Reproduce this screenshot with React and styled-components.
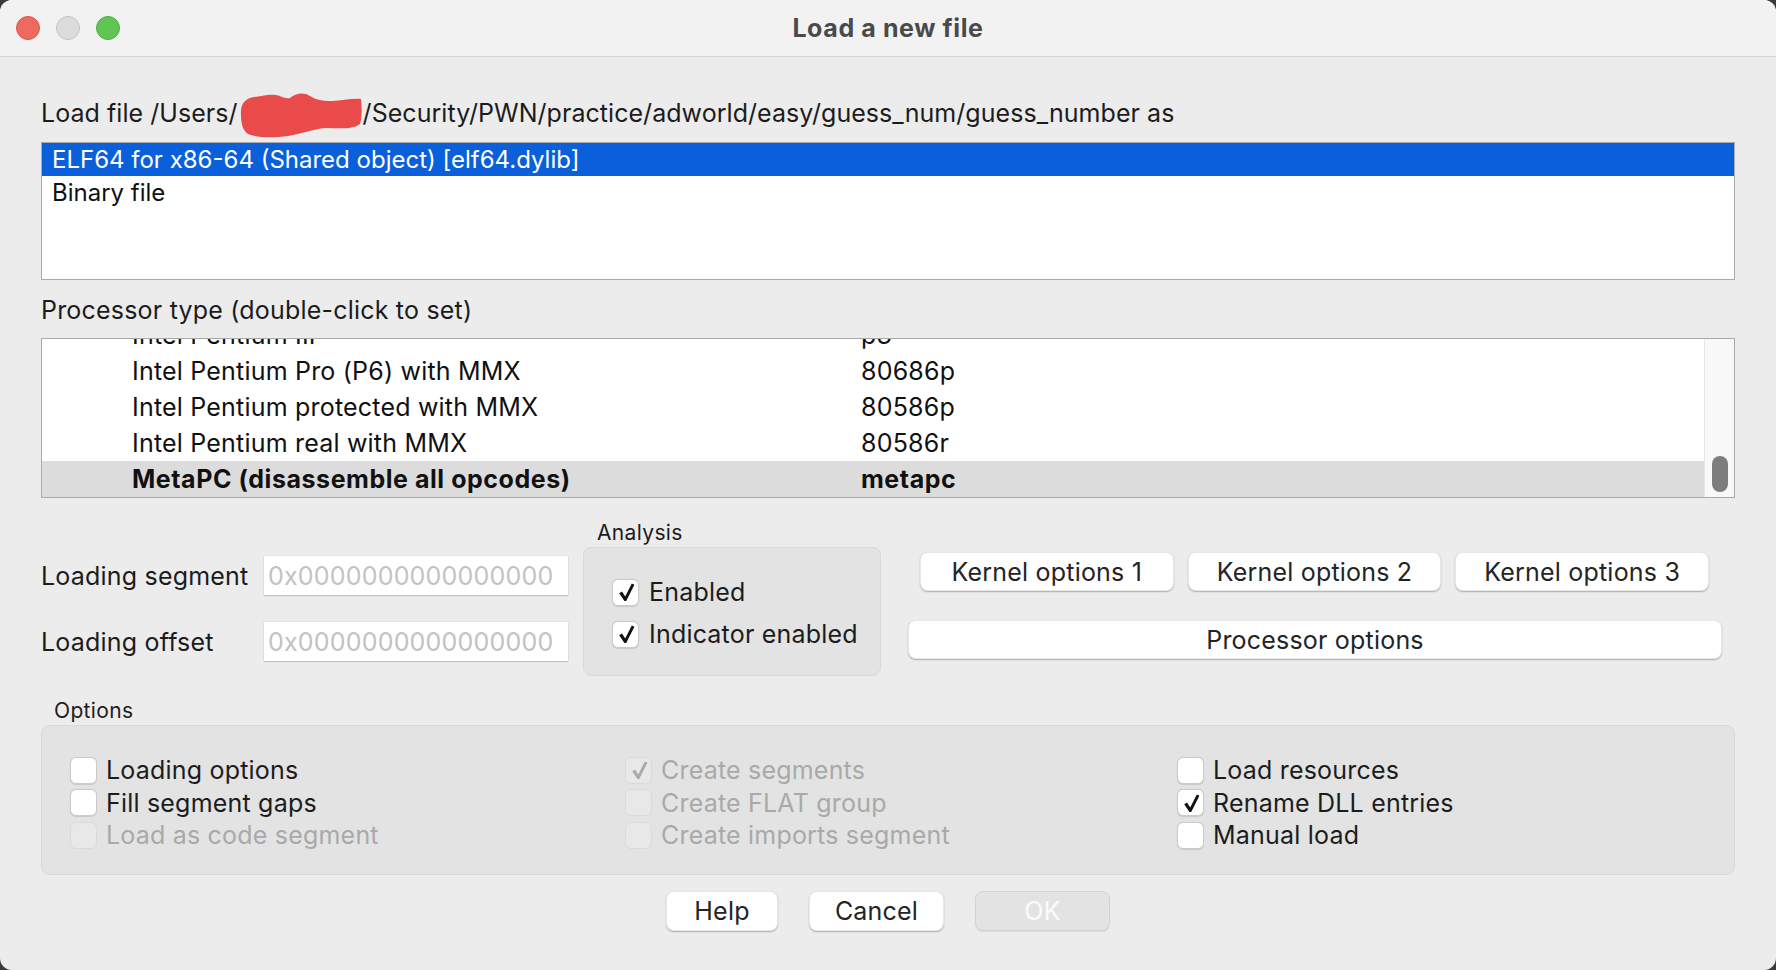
import React from 'react';
import styled, { createGlobalStyle } from 'styled-components';

const FONT = 'Inter, "Noto Sans", "Liberation Sans", sans-serif';

const GlobalStyle = createGlobalStyle`
  html, body { margin: 0; padding: 0; background: #3a3a3a; }
  body { font-family: ${FONT}; }
  #root { width: 1776px; height: 970px; }
  * { box-sizing: border-box; }
`;

const Window = styled.div`
  width: 1776px;
  height: 970px;
  background: #ececec;
  border-radius: 12px;
  overflow: hidden;
  display: flex;
  flex-direction: column;
  color: #1c1c1c;
  font-size: 25px;
  letter-spacing: 0.2px;
`;

const TitleBar = styled.div`
  height: 57px;
  flex: none;
  background: #f2f2f2;
  border-bottom: 1px solid #d3d3d3;
  display: grid;
  grid-template-columns: 1fr auto 1fr;
  align-items: center;
  padding: 0 16px;
`;

const Lights = styled.div`
  display: flex;
  gap: 16px;
`;

const Light = styled.span`
  width: 24px;
  height: 24px;
  border-radius: 50%;
  background: ${(p) => p.$fill};
  border: 1px solid ${(p) => p.$edge};
`;

const Title = styled.div`
  font-weight: 700;
  font-size: 25px;
  letter-spacing: 0.6px;
  color: #4a4a4a;
`;

const Body = styled.div`
  padding: 42px 41px 0;
  display: flex;
  flex-direction: column;
`;

const FieldLabel = styled.div`
  height: 28px;
  line-height: 28px;
  display: flex;
  align-items: center;
  white-space: pre;
  letter-spacing: ${(p) => p.$spacing ?? 0.2}px;
  margin-top: ${(p) => p.$top || 0}px;
  margin-bottom: ${(p) => p.$bottom || 0}px;
`;

const Redaction = styled.svg`
  flex: none;
  margin-top: 4px;
`;

const ListBox = styled.div`
  height: 138px;
  background: #fff;
  border: 1px solid #a9a9a9;
`;

const FormatRow = styled.div`
  height: 33px;
  line-height: 33px;
  padding-left: 10px;
  font-size: 24px;
  letter-spacing: 0;
  background: ${(p) => (p.$selected ? '#0a5fdb' : 'transparent')};
  color: ${(p) => (p.$selected ? '#fff' : '#111')};
`;

const ProcList = styled.div`
  height: 160px;
  background: #fff;
  border: 1px solid #a9a9a9;
  display: flex;
`;

const ProcRows = styled.div`
  flex: 1;
  overflow: hidden;
  display: flex;
  flex-direction: column;
  justify-content: flex-end;
`;

const ProcRow = styled.div`
  flex: none;
  height: 36px;
  line-height: 36px;
  display: grid;
  grid-template-columns: 729px 1fr;
  padding-left: 90px;
  background: ${(p) => (p.$selected ? '#dcdcdc' : 'transparent')};
  font-weight: ${(p) => (p.$selected ? 700 : 400)};
  letter-spacing: ${(p) => (p.$selected ? '0.55px' : '0.2px')};
  color: #111;
`;

const ScrollTrack = styled.div`
  width: 30px;
  flex: none;
  background: #f8f8f8;
  border-left: 1px solid #e6e6e6;
  display: flex;
  flex-direction: column;
  justify-content: flex-end;
  align-items: center;
  padding-bottom: 5px;
`;

const Thumb = styled.div`
  width: 16px;
  height: 36px;
  border-radius: 8px;
  background: #7d7d7d;
`;

const Middle = styled.div`
  margin-top: 21px;
  display: flex;
  align-items: flex-start;
`;

const AddressGrid = styled.div`
  padding-top: 37px;
  display: grid;
  grid-template-columns: 223px 304px;
  grid-template-rows: 39px 39px;
  row-gap: 27px;
  align-items: center;
`;

const AddressInput = styled.input`
  width: 304px;
  height: 39px;
  border: none;
  outline: none;
  background: #fff;
  box-shadow: 0 1px 1px rgba(0, 0, 0, 0.16), 0 0 0 0.5px rgba(0, 0, 0, 0.05);
  font-family: ${FONT};
  font-size: 25px;
  letter-spacing: 0.2px;
  padding: 0 4px;
  color: #222;
  &::placeholder { color: #c2c2c2; }
`;

const GroupColumn = styled.div`
  margin-left: ${(p) => p.$left || 0}px;
  width: ${(p) => p.$width}px;
  flex: none;
  display: flex;
  flex-direction: column;
`;

const GroupTitle = styled.div`
  height: 28px;
  line-height: 28px;
  font-size: 21px;
  letter-spacing: 0.35px;
  padding-left: ${(p) => p.$indent}px;
  margin-top: ${(p) => p.$top || 0}px;
  color: #1c1c1c;
`;

const GroupBox = styled.div`
  background: #e3e3e3;
  border: 1px solid #d9d9d9;
  border-radius: 8px;
  height: ${(p) => p.$height}px;
`;

const AnalysisList = styled.div`
  padding: 26px 0 0 28px;
  display: flex;
  flex-direction: column;
  gap: 6px;
`;

const CheckRow = styled.div`
  height: ${(p) => p.$h || 36}px;
  display: flex;
  align-items: center;
  gap: ${(p) => p.$gap || 9}px;
  color: ${(p) => (p.$disabled ? '#a9a9a9' : '#1c1c1c')};
  white-space: nowrap;
`;

const Box = styled.span`
  flex: none;
  width: 27px;
  height: 27px;
  border-radius: 6px;
  display: flex;
  align-items: center;
  justify-content: center;
  background: ${(p) => (p.$disabled ? '#e8e8e8' : '#fff')};
  border: 1px solid ${(p) => (p.$disabled ? '#dadada' : '#cbcbcb')};
  box-shadow: ${(p) => (p.$disabled ? 'none' : '0 0.5px 1px rgba(0,0,0,0.12)')};
`;

const ButtonColumn = styled.div`
  margin-left: 27px;
  width: 814px;
  padding-top: 33px;
  display: flex;
  flex-direction: column;
  gap: 29px;
`;

const KernelRow = styled.div`
  display: flex;
  gap: 14px;
  padding: 0 13px 0 12px;
`;

const PushButton = styled.button`
  height: ${(p) => p.$h || 39}px;
  flex: ${(p) => (p.$grow ? '1 1 0' : 'none')};
  width: ${(p) => (p.$w ? `${p.$w}px` : 'auto')};
  border-radius: 8px;
  font-family: ${FONT};
  font-size: 25px;
  letter-spacing: 0.2px;
  padding: 0;
  background: ${(p) => (p.disabled ? '#e3e3e3' : '#fff')};
  color: ${(p) => (p.disabled ? '#fbfbfb' : '#242424')};
  border: 1px solid ${(p) => (p.disabled ? '#d3d3d3' : 'rgba(0,0,0,0.09)')};
  box-shadow: ${(p) => (p.disabled ? '0 1px 1px rgba(0,0,0,0.08)' : '0 1px 1.5px rgba(0,0,0,0.28)')};
`;

const OptionsGrid = styled.div`
  padding: 28px 0 0 28px;
  display: grid;
  grid-auto-flow: column;
  grid-template-rows: repeat(3, 32.5px);
  grid-template-columns: 555px 552px 1fr;
`;

const Footer = styled.div`
  margin-top: 16px;
  display: flex;
  justify-content: center;
  gap: 31px;
`;

const Check = ({ disabled }) => (
  <svg width="20" height="22" viewBox="0 0 20 22">
    <path
      d="M3.2 12.2 L6 10.6 L9.2 15.6 L15.8 2.6 L18.4 3.8 L10.2 20 L8.4 20 Z"
      fill={disabled ? '#aaaaaa' : '#111111'}
    />
  </svg>
);

const CheckBox = ({ label, checked, disabled, gap, h }) => (
  <CheckRow $disabled={disabled} $gap={gap} $h={h}>
    <Box $disabled={disabled}>{checked && <Check disabled={disabled} />}</Box>
    <span>{label}</span>
  </CheckRow>
);

const procRows = [
  ['Intel Pentium III', 'p3'],
  ['Intel Pentium Pro (P6) with MMX', '80686p'],
  ['Intel Pentium protected with MMX', '80586p'],
  ['Intel Pentium real with MMX', '80586r'],
  ['MetaPC (disassemble all opcodes)', 'metapc', true],
];

const options = [
  ['Loading options', false, false],
  ['Fill segment gaps', false, false],
  ['Load as code segment', false, true],
  ['Create segments', true, true],
  ['Create FLAT group', false, true],
  ['Create imports segment', false, true],
  ['Load resources', false, false],
  ['Rename DLL entries', true, false],
  ['Manual load', false, false],
];

export default function App() {
  return (
    <>
      <GlobalStyle />
      <Window>
        <TitleBar>
          <Lights>
            <Light $fill="#ee6a5f" $edge="#d65a50" />
            <Light $fill="#dcdcdc" $edge="#c5c5c5" />
            <Light $fill="#61c554" $edge="#50ad44" />
          </Lights>
          <Title>Load a new file</Title>
          <span />
        </TitleBar>
        <Body>
          <FieldLabel $bottom={15} $spacing={0.05}>
            <span>Load file /Users/</span>
            <Redaction width="125" height="46" viewBox="0 0 125 46">
              <path
                d="M3 22 C2 12 8 6 16 5 C26 4 30 2 38 3 C44 4 46 7 52 6 C58 1 66 0 72 4 C78 8 84 9 94 9 C104 9 114 6 123 7 C124 16 124 26 122 32 C114 38 100 36 88 36 C74 37 64 42 50 44 C36 46 20 46 10 42 C4 38 3 30 3 22 Z"
                fill="#e94a4a"
              />
            </Redaction>
            <span>/Security/PWN/practice/adworld/easy/guess_num/guess_number as</span>
          </FieldLabel>
          <ListBox>
            <FormatRow $selected>ELF64 for x86-64 (Shared object) [elf64.dylib]</FormatRow>
            <FormatRow>Binary file</FormatRow>
          </ListBox>
          <FieldLabel $top={16} $bottom={14}>Processor type (double-click to set)</FieldLabel>
          <ProcList>
            <ProcRows>
              {procRows.map(([name, code, sel]) => (
                <ProcRow key={code} $selected={sel}>
                  <span>{name}</span>
                  <span>{code}</span>
                </ProcRow>
              ))}
            </ProcRows>
            <ScrollTrack>
              <Thumb />
            </ScrollTrack>
          </ProcList>
          <Middle>
            <AddressGrid>
              <span>Loading segment</span>
              <AddressInput readOnly placeholder="0x0000000000000000" />
              <span>Loading offset</span>
              <AddressInput readOnly placeholder="0x0000000000000000" />
            </AddressGrid>
            <GroupColumn $left={15} $width={298}>
              <GroupTitle $indent={14}>Analysis</GroupTitle>
              <GroupBox $height={129}>
                <AnalysisList>
                  <CheckBox label="Enabled" checked gap={10} />
                  <CheckBox label="Indicator enabled" checked gap={10} />
                </AnalysisList>
              </GroupBox>
            </GroupColumn>
            <ButtonColumn>
              <KernelRow>
                <PushButton $grow>Kernel options 1</PushButton>
                <PushButton $grow>Kernel options 2</PushButton>
                <PushButton $grow>Kernel options 3</PushButton>
              </KernelRow>
              <PushButton>Processor options</PushButton>
            </ButtonColumn>
          </Middle>
          <GroupTitle $indent={13} $top={21}>Options</GroupTitle>
          <GroupBox $height={150}>
            <OptionsGrid>
              {options.map(([label, checked, disabled]) => (
                <CheckBox key={label} label={label} checked={checked} disabled={disabled} h={32.5} />
              ))}
            </OptionsGrid>
          </GroupBox>
          <Footer>
            <PushButton $w={112} $h={40}>Help</PushButton>
            <PushButton $w={135} $h={40}>Cancel</PushButton>
            <PushButton $w={135} $h={40} disabled>OK</PushButton>
          </Footer>
        </Body>
      </Window>
    </>
  );
}
